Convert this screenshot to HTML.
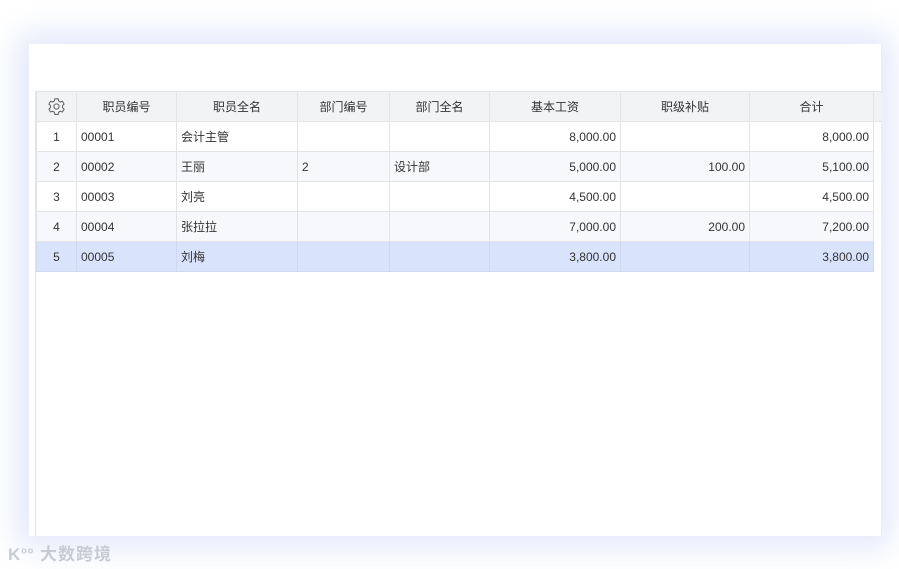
<!DOCTYPE html>
<html><head><meta charset="utf-8"><style>
body{margin:0;width:899px;height:569px;background:#fff;position:relative;overflow:hidden;font-family:"Liberation Sans","Noto Sans CJK SC",sans-serif;font-size:12px;color:#333}
.glow{position:absolute;left:14px;top:30px;width:880px;height:520px;background:#e6ebfb;filter:blur(14px);border-radius:20px}
.panel{position:absolute;left:29px;top:44px;width:852px;height:492px;background:#fff;border-right:1px solid #eceef2}
.vline{position:absolute;left:35px;top:91px;width:1px;height:445px;background:#e2e4e8}
table{position:absolute;left:36px;top:91px;border-collapse:collapse;table-layout:fixed}
td,th{border:1px solid #e2e4e8;height:29px;padding:0 4px;white-space:nowrap;overflow:hidden}
th{background:#f2f3f5;font-weight:normal;color:#333;text-align:center}
.r{text-align:right}.c{text-align:center}
tr.a td{background:#f7f8fc}
tr.s td{background:#d9e4fc;border-color:#cfd8ec}
.logo{position:absolute;left:8px;top:540px;color:#c8cbd3;font-size:17px;font-weight:bold;letter-spacing:1px}
</style></head><body>
<div class="glow"></div>
<div class="panel"></div>
<div class="vline"></div>
<table>
<colgroup><col style="width:40px"><col style="width:100px"><col style="width:121px"><col style="width:92px"><col style="width:100px"><col style="width:131px"><col style="width:129px"><col style="width:124px"><col style="width:8px"></colgroup>
<tr><th><svg width="19" height="19" viewBox="0 0 16 16" fill="none" stroke="#666" stroke-width="0.9" style="vertical-align:middle"><path d="M6.6 1.5h2.8l.4 1.9 1.4.8 1.8-.6 1.4 2.4-1.4 1.3v1.6l1.4 1.3-1.4 2.4-1.8-.6-1.4.8-.4 1.9H6.6l-.4-1.9-1.4-.8-1.8.6-1.4-2.4 1.4-1.3V7.3L1.6 6l1.4-2.4 1.8.6 1.4-.8z"/><circle cx="8" cy="8" r="2.2"/></svg></th><th>职员编号</th><th>职员全名</th><th>部门编号</th><th>部门全名</th><th>基本工资</th><th>职级补贴</th><th>合计</th><th style="border-right:none"></th></tr>
<tr><td class="c">1</td><td>00001</td><td>会计主管</td><td></td><td></td><td class="r">8,000.00</td><td></td><td class="r">8,000.00</td></tr>
<tr class="a"><td class="c">2</td><td>00002</td><td>王丽</td><td>2</td><td>设计部</td><td class="r">5,000.00</td><td class="r">100.00</td><td class="r">5,100.00</td></tr>
<tr><td class="c">3</td><td>00003</td><td>刘亮</td><td></td><td></td><td class="r">4,500.00</td><td></td><td class="r">4,500.00</td></tr>
<tr class="a"><td class="c">4</td><td>00004</td><td>张拉拉</td><td></td><td></td><td class="r">7,000.00</td><td class="r">200.00</td><td class="r">7,200.00</td></tr>
<tr class="s"><td class="c">5</td><td>00005</td><td>刘梅</td><td></td><td></td><td class="r">3,800.00</td><td></td><td class="r">3,800.00</td></tr>
</table>
<div class="logo">K<sup style="font-size:9px">oo</sup> 大数跨境</div>
</body></html>
